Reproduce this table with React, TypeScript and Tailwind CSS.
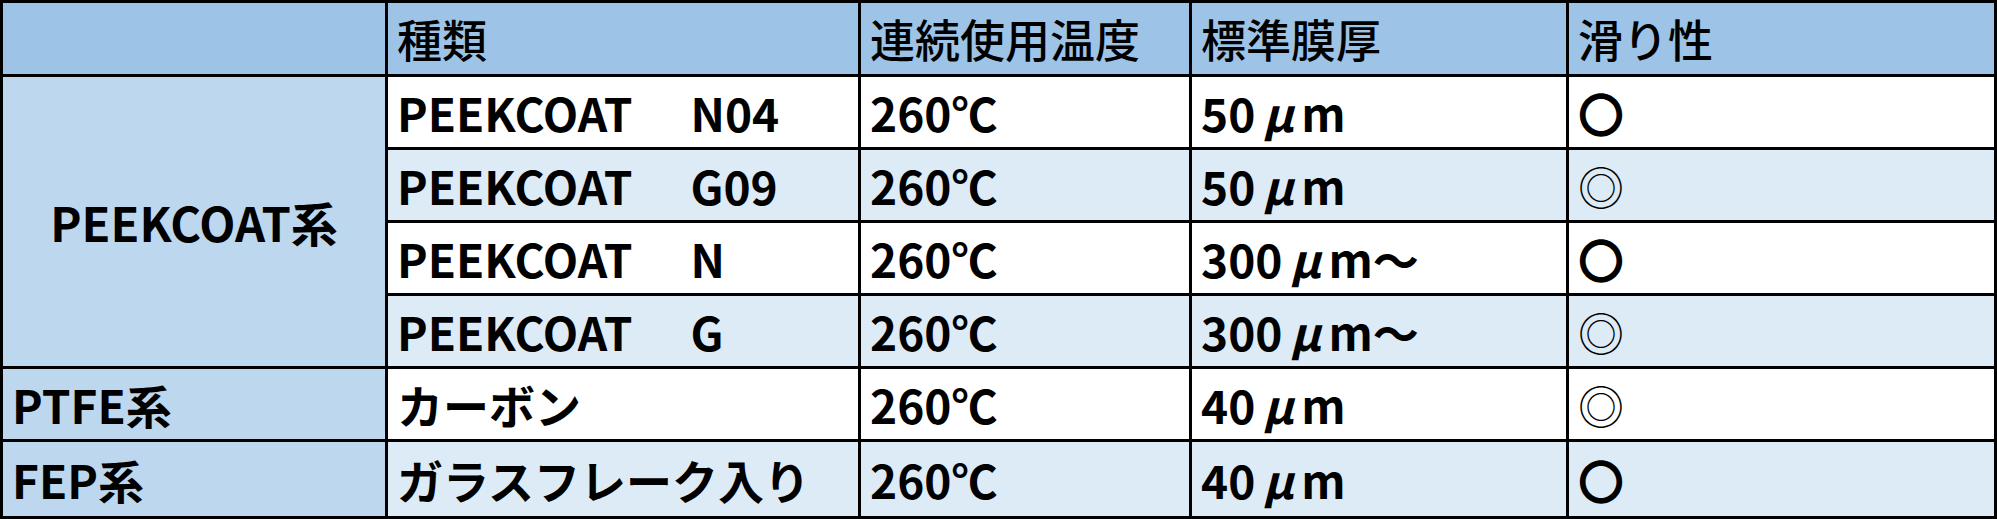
import React from 'react';

type Row = {
  name: React.ReactNode;
  temp: string;
  thickness: React.ReactNode;
  slip: string;
  bg: string;
};

// full-width μ like the Japanese font in the original sheet
const Mu = () => <span className="inline-block w-[1em] text-center italic">μ</span>;
const Gap = () => <span className="inline-block w-[58px]" />;

const rows: Row[] = [
  { name: <>PEEKCOAT<Gap />N04</>, temp: '260℃', thickness: <>50<Mu />m</>, slip: '〇', bg: 'bg-white' },
  { name: <>PEEKCOAT<Gap />G09</>, temp: '260℃', thickness: <>50<Mu />m</>, slip: '◎', bg: 'bg-[#ddebf7]' },
  { name: <>PEEKCOAT<Gap />N</>, temp: '260℃', thickness: <>300<Mu />m～</>, slip: '〇', bg: 'bg-white' },
  { name: <>PEEKCOAT<Gap />G</>, temp: '260℃', thickness: <>300<Mu />m～</>, slip: '◎', bg: 'bg-[#ddebf7]' },
  { name: 'カーボン', temp: '260℃', thickness: <>40<Mu />m</>, slip: '◎', bg: 'bg-white' },
  { name: 'ガラスフレーク入り', temp: '260℃', thickness: <>40<Mu />m</>, slip: '〇', bg: 'bg-[#ddebf7]' },
];

const headers = ['', '種類', '連続使用温度', '標準膜厚', '滑り性'];

const Cell: React.FC<{ className?: string; children?: React.ReactNode }> = ({ className = '', children }) => (
  <div className={`flex items-center whitespace-nowrap pl-[9px] ${className}`}>{children}</div>
);

const App: React.FC = () => {
  return (
    <div className="w-[1997px] h-[519px] bg-white font-['Noto_Sans_CJK_JP','Noto_Sans_CJK_SC',sans-serif] text-[46px] leading-none text-black">
      <div className="grid h-full grid-cols-[382px_470px_328px_374px_1fr] grid-rows-[71px_70px_70px_70px_70px_70px_1fr] gap-[3px] bg-black p-[3px]">
        {/* header */}
        {headers.map((h, i) => (
          <Cell key={i} className="bg-[#9dc3e6] text-[45px] font-medium">
            {h}
          </Cell>
        ))}

        {/* PEEKCOAT group label spans four rows */}
        <div className="row-span-4 flex items-center justify-center bg-[#bdd7ee] text-[47px] font-bold">
          PEEKCOAT系
        </div>

        {rows.map((r, i) => (
          <React.Fragment key={i}>
            {i === 4 && <Cell className="bg-[#bdd7ee] font-bold">PTFE系</Cell>}
            {i === 5 && <Cell className="bg-[#bdd7ee] font-bold">FEP系</Cell>}
            <Cell className={`${r.bg} font-bold`}>{r.name}</Cell>
            <Cell className={`${r.bg} font-bold`}>{r.temp}</Cell>
            <Cell className={`${r.bg} font-bold`}>{r.thickness}</Cell>
            <Cell className={`${r.bg} ${r.slip === '◎' ? 'font-light' : 'font-bold'}`}>{r.slip}</Cell>
          </React.Fragment>
        ))}
      </div>
    </div>
  );
};

export default App;
